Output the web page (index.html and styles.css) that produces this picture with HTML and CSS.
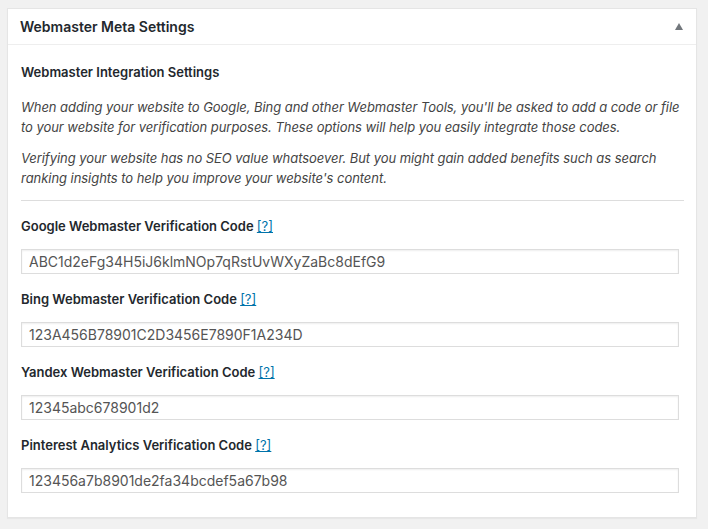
FILE: index.html
```html
<!DOCTYPE html>
<html lang="en">
<head>
    <meta charset="UTF-8">
    <meta name="viewport" content="width=device-width, initial-scale=1.0">
    <link rel="stylesheet" href="styles.css">
</head>
<body>
    <div class="postbox">
        <div class="postbox-header">
            <h2 class="hndle">Webmaster Meta Settings</h2>
            <span class="toggle-indicator"></span>
        </div>
        <div class="inside">
            <h3 class="section-title">Webmaster Integration Settings</h3>
            <p class="description">When adding your website to Google, Bing and other Webmaster Tools, you'll be asked to add a code or file to your website for verification purposes. These options will help you easily integrate those codes.</p>
            <p class="description">Verifying your website has no SEO value whatsoever. But you might gain added benefits such as search ranking insights to help you improve your website's content.</p>
            <hr class="divider">

            <div class="field">
                <label class="field-label">Google Webmaster Verification Code <a href="#">[?]</a></label>
                <input class="field-input" type="text" value="ABC1d2eFg34H5iJ6klmNOp7qRstUvWXyZaBc8dEfG9">
            </div>
            <div class="field">
                <label class="field-label">Bing Webmaster Verification Code <a href="#">[?]</a></label>
                <input class="field-input" type="text" value="123A456B78901C2D3456E7890F1A234D">
            </div>
            <div class="field">
                <label class="field-label">Yandex Webmaster Verification Code <a href="#">[?]</a></label>
                <input class="field-input" type="text" value="12345abc678901d2">
            </div>
            <div class="field">
                <label class="field-label">Pinterest Analytics Verification Code <a href="#">[?]</a></label>
                <input class="field-input" type="text" value="123456a7b8901de2fa34bcdef5a67b98">
            </div>
        </div>
    </div>
</body>
</html>
```

FILE: styles.css
```css
body {
    margin: 0;
    padding: 8px 11px 12px 7px;
    background-color: #f1f1f1;
    font-family: Inter, "Liberation Sans", sans-serif;
    font-size: 13px;
    color: #444;
}

.postbox {
    background-color: #fff;
    border: 1px solid #e5e5e5;
    box-shadow: 0 1px 1px rgba(0, 0, 0, 0.04);
}

.postbox-header {
    display: flex;
    justify-content: space-between;
    align-items: center;
    height: 35px;
    padding: 0 13px 0 12px;
    border-bottom: 1px solid #eee;
}

.hndle {
    margin: 0;
    font-size: 14px;
    font-weight: 600;
    color: #23282d;
}

.toggle-indicator {
    width: 0;
    height: 0;
    border-left: 4px solid transparent;
    border-right: 4px solid transparent;
    border-bottom: 7px solid #72777c;
}

.inside {
    padding: 19px 11px 24px 13px;
}

.section-title {
    margin: 0 0 18px 0;
    font-size: 13px;
    font-weight: 600;
    color: #23282d;
}

.description {
    margin: 0 0 12px 0;
    font-style: italic;
    line-height: 19.5px;
    letter-spacing: -0.05px;
    color: #444;
}

.divider {
    margin: 0 1px 16px 0;
    border: 0;
    border-top: 1px solid #ddd;
}

.field {
    display: flex;
    flex-direction: column;
    gap: 14px;
    margin-bottom: 16px;
}

.field:last-child {
    margin-bottom: 0;
}

.field-label {
    font-weight: 600;
    color: #23282d;
    line-height: 18px;
}

.field-label a {
    color: #0073aa;
    font-weight: 400;
}

.field-input {
    box-sizing: border-box;
    width: 658px;
    height: 25px;
    margin: 0;
    padding: 0 7px;
    border: 1px solid #ddd;
    box-shadow: inset 0 1px 2px rgba(0, 0, 0, 0.07);
    font-family: Inter, "Liberation Sans", sans-serif;
    font-size: 14px;
    color: #555;
    background-color: #fff;
}
```
